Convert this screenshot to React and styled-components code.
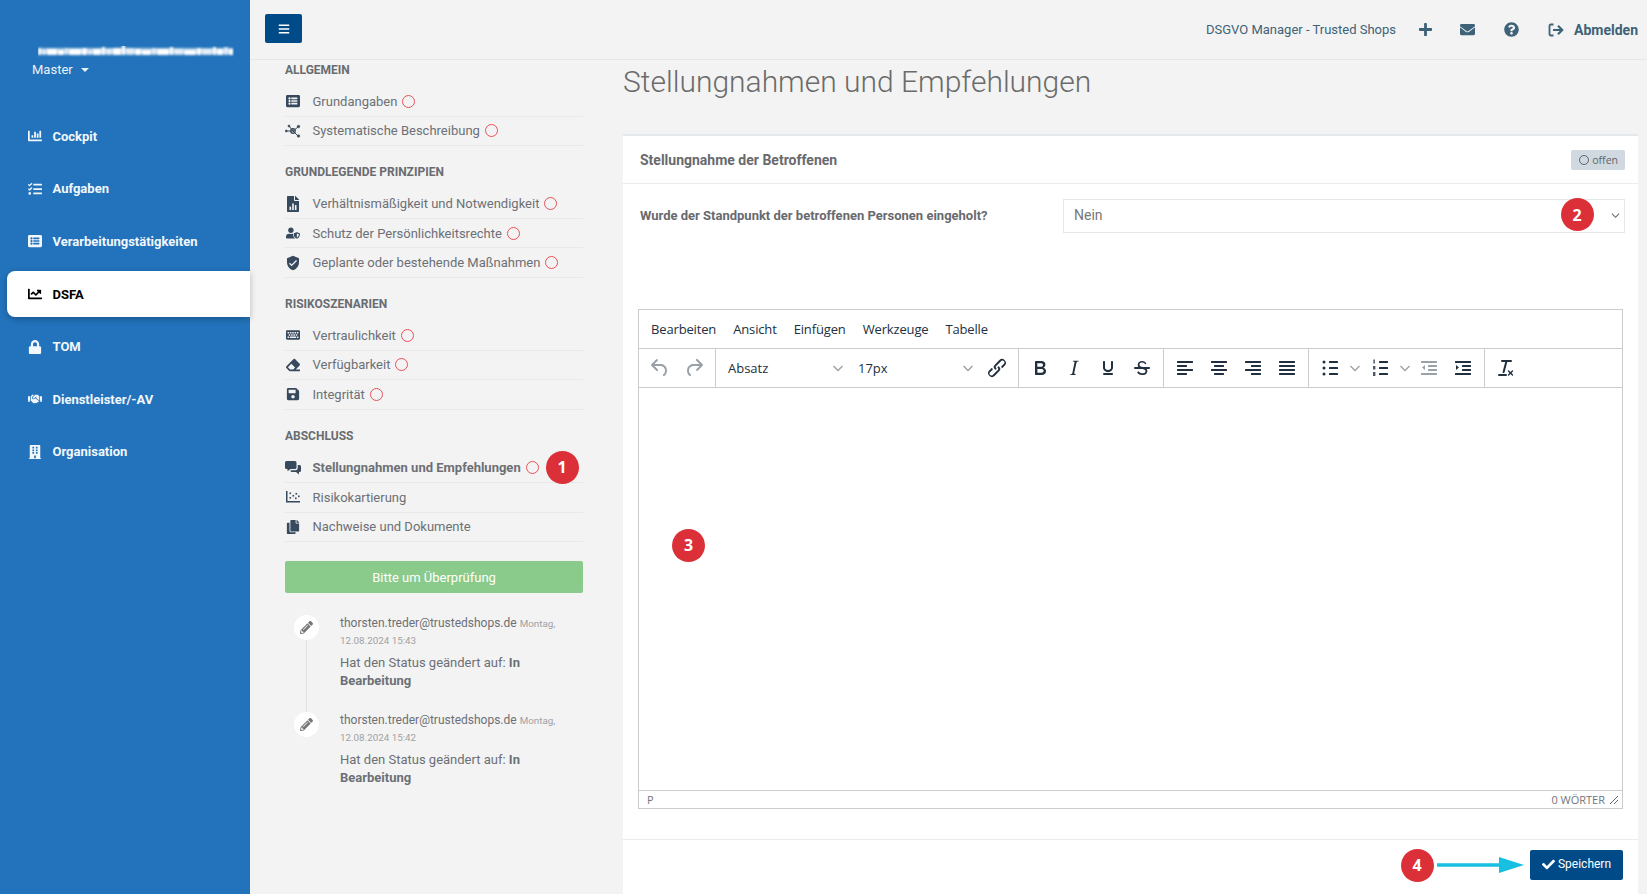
import React from 'react'
import styled, { createGlobalStyle } from 'styled-components'
import {
  FaBars, FaBuilding, FaChartBar, FaChartLine, FaCheck, FaCopy, FaEnvelope, FaEraser,
  FaHandshake, FaKeyboard, FaListAlt, FaLock, FaPencilAlt, FaPlus, FaQuestionCircle, FaSave,
  FaTasks, FaUserShield,
} from 'react-icons/fa'
import { MdVerifiedUser } from 'react-icons/md'

const GlobalStyle = createGlobalStyle`
  html, body {
    margin: 0;
    height: 100%;
    overflow: hidden;
    background: #f3f3f3;
    font-family: Roboto, 'Liberation Sans', sans-serif;
  }
  * { box-sizing: border-box; }
`

const FileChartIcon = () => (
  <svg viewBox="0 0 384 512" width="12" height="16" fill="currentColor">
    <path d="M224 136V0H24C10.700 0 0 10.700 0 24v464c0 13.300 10.700 24 24 24h336c13.300 0 24-10.700 24-24V160H248c-13.200 0-24-10.800-24-24zM384 122v6H256V0h6c6.400 0 12.500 2.500 17 7l98 98c4.500 4.500 7 10.600 7 17z" />
    <rect x="80" y="340" width="52" height="110" fill="#f3f3f3" />
    <rect x="166" y="240" width="52" height="210" fill="#f3f3f3" />
    <rect x="252" y="290" width="52" height="160" fill="#f3f3f3" />
  </svg>
)

const ScatterIcon = () => (
  <svg viewBox="0 0 14 12" width="14" height="12" fill="currentColor">
    <path d="M0 0h1.500v10H14v1.500H0z" />
    <rect x="3.500" y="1.500" width="1.600" height="1.600" />
    <rect x="3.500" y="6" width="1.600" height="1.600" />
    <rect x="6.500" y="4" width="1.600" height="1.600" />
    <rect x="9" y="6.500" width="1.600" height="1.600" />
    <rect x="9.500" y="2" width="1.600" height="1.600" />
    <rect x="12" y="4.500" width="1.600" height="1.600" />
  </svg>
)

const NodesIcon = () => (
  <svg viewBox="0 0 16 14" width="16" height="14" fill="currentColor" stroke="currentColor">
    <path d="M8 7L4 2M8 7l5-4M8 7l5 5M8 7H1" strokeWidth="1" fill="none" />
    <circle cx="8" cy="7" r="2.200" fill="none" strokeWidth="1.400" />
    <circle cx="4" cy="2" r="1.100" strokeWidth="0.500" />
    <circle cx="13.500" cy="2.500" r="1.300" strokeWidth="0.500" />
    <circle cx="13.500" cy="12" r="1.300" strokeWidth="0.500" />
    <circle cx="1.200" cy="7" r="1.100" strokeWidth="0.500" />
  </svg>
)

const BubblesIcon = () => (
  <svg viewBox="0 0 16 14" width="16" height="14" fill="currentColor">
    <path d="M1.500 0h8.500a1.500 1.500 0 0 1 1.500 1.500v5A1.500 1.500 0 0 1 10 8H5.500L2.500 10.200V8h-1A1.500 1.500 0 0 1 0 6.500v-5A1.500 1.500 0 0 1 1.500 0z" />
    <path d="M12.800 4h1.700A1.500 1.500 0 0 1 16 5.500v4a1.500 1.500 0 0 1-1.500 1.500H14v2.500L11 11H7a1.500 1.500 0 0 1-1.500-1.500V9.200H10a2.800 2.800 0 0 0 2.800-2.800z" />
  </svg>
)

const LogoutIcon = () => (
  <svg viewBox="0 0 16 14" width="16" height="14" fill="none" stroke="currentColor">
    <path d="M5.500 1.500H2.700a1.200 1.200 0 0 0-1.200 1.200v8.600a1.200 1.200 0 0 0 1.200 1.200h2.800" strokeWidth="1.800" />
    <path d="M5 7h9M10 2.800L14.200 7 10 11.200" strokeWidth="2.200" />
  </svg>
)

const LOGO_BARS = [
  [0, 3, 7], [4, 4, 5], [9, 10, 6], [20, 6, 5], [27, 3, 7], [31, 12, 6], [44, 5, 7], [50, 4, 5], [55, 8, 6],
  [64, 3, 8], [68, 6, 6], [75, 8, 7], [84, 3, 12], [88, 8, 7], [97, 6, 6], [104, 9, 5], [114, 4, 7], [119, 12, 6],
  [132, 3, 8], [136, 9, 6], [146, 12, 5], [159, 4, 7], [164, 10, 6], [175, 3, 8], [179, 6, 6], [186, 4, 8], [191, 4, 6],
]

const BlurredLogo = () => (
  <svg width="196" height="14" viewBox="0 0 196 14">
    <filter id="smear"><feGaussianBlur stdDeviation="1" /></filter>
    <g fill="#fff" filter="url(#smear)">
      <rect x="0" y="2" width="195" height="6" opacity="0.6" />
      {LOGO_BARS.map(([x, w, h], i) => (
        <rect key={i} x={x} y={9 - h} width={w} height={h} opacity={i % 3 === 1 ? 0.7 : 1} />
      ))}
    </g>
  </svg>
)

const NAV = [
  { label: 'Cockpit', icon: <FaChartBar /> },
  { label: 'Aufgaben', icon: <FaTasks /> },
  { label: 'Verarbeitungstätigkeiten', icon: <FaListAlt /> },
  { label: 'DSFA', icon: <FaChartLine />, active: true },
  { label: 'TOM', icon: <FaLock /> },
  { label: 'Dienstleister/-AV', icon: <FaHandshake /> },
  { label: 'Organisation', icon: <FaBuilding /> },
]

const SECTIONS = [
  {
    title: 'Allgemein',
    items: [
      { label: 'Grundangaben', icon: <FaListAlt /> },
      { label: 'Systematische Beschreibung', icon: <NodesIcon /> },
    ],
  },
  {
    title: 'Grundlegende Prinzipien',
    items: [
      { label: 'Verhältnismäßigkeit und Notwendigkeit', icon: <FileChartIcon /> },
      { label: 'Schutz der Persönlichkeitsrechte', icon: <FaUserShield /> },
      { label: 'Geplante oder bestehende Maßnahmen', icon: <MdVerifiedUser size={16} /> },
    ],
  },
  {
    title: 'Risikoszenarien',
    items: [
      { label: 'Vertraulichkeit', icon: <FaKeyboard /> },
      { label: 'Verfügbarkeit', icon: <FaEraser /> },
      { label: 'Integrität', icon: <FaSave /> },
    ],
  },
  {
    title: 'Abschluss',
    roomy: true,
    items: [
      { label: 'Stellungnahmen und Empfehlungen', icon: <BubblesIcon />, active: true },
      { label: 'Risikokartierung', icon: <ScatterIcon />, noRing: true },
      { label: 'Nachweise und Dokumente', icon: <FaCopy />, noRing: true },
    ],
  },
]

const HISTORY = [
  { user: 'thorsten.treder@trustedshops.de', date: '12.08.2024 15:43' },
  { user: 'thorsten.treder@trustedshops.de', date: '12.08.2024 15:42' },
]

const Tiny = ({ children, muted }) => (
  <svg viewBox="0 0 24 24" width="24" height="24" fill={muted ? '#9aa0a8' : '#222f3e'}>
    {children}
  </svg>
)

const lines = (rows) => rows.map(([x, y, w], i) => <rect key={i} x={x} y={y} width={w} height="2" rx="0.5" />)

const Chevron = () => (
  <svg viewBox="0 0 10 10" width="10" height="10" fill="none" stroke="#9aa0a8" strokeWidth="1.300">
    <path d="M0.500 3l4.500 4.500L9.500 3" />
  </svg>
)

const ToolIcons = {
  undo: <Tiny muted><path d="M6.400 8H12c3.700 0 6.200 2 6.800 5.100.6 2.700-.4 5.600-2.300 6.800a1 1 0 0 1-1-1.800c1.100-.6 1.800-2.700 1.400-4.600-.5-2.100-2.100-3.500-4.900-3.500H6.400l3.300 3.300a1 1 0 1 1-1.400 1.400l-5-5a1 1 0 0 1 0-1.400l5-5a1 1 0 0 1 1.400 1.400L6.400 8Z" /></Tiny>,
  redo: <Tiny muted><path d="M17.600 10H12c-2.800 0-4.400 1.400-4.900 3.500-.4 2 .3 4 1.400 4.600a1 1 0 1 1-1 1.800c-2-1.200-2.900-4.100-2.300-6.800.6-3 3-5.100 6.800-5.100h5.600l-3.300-3.300a1 1 0 1 1 1.400-1.400l5 5a1 1 0 0 1 0 1.400l-5 5a1 1 0 0 1-1.400-1.400l3.300-3.300Z" /></Tiny>,
  link: <Tiny><path d="M6.200 12.300a1 1 0 0 1 1.400 1.400l-2 2a2 2 0 1 0 2.600 2.800l4.800-4.800a1 1 0 0 0 0-1.400 1 1 0 1 1 1.400-1.300 2.900 2.900 0 0 1 0 4L9.600 20a3.900 3.900 0 0 1-5.500-5.500l2-2Zm11.600-.6a1 1 0 0 1-1.400-1.400l2-2a2 2 0 1 0-2.600-2.800L11 10.300a1 1 0 0 0 0 1.400 1 1 0 1 1-1.400 1.300 2.900 2.900 0 0 1 0-4L14.400 4a3.900 3.900 0 0 1 5.500 5.500l-2 2Z" /></Tiny>,
  bold: <Tiny><path d="M7.800 19c-.3 0-.5 0-.6-.2l-.2-.5V5.700c0-.2 0-.4.2-.5l.6-.2h5c1.500 0 2.700.3 3.500 1 .7.6 1.100 1.400 1.100 2.500a3 3 0 0 1-.6 1.900c-.4.6-1 1-1.600 1.200.4.1.9.3 1.300.6s.8.7 1 1.200c.4.4.5 1 .5 1.600 0 1.300-.4 2.300-1.300 3-.8.7-2.100 1-3.800 1H7.800Zm5-8.300c.6 0 1.200-.1 1.600-.5.4-.3.6-.7.6-1.300 0-1.100-.8-1.700-2.300-1.700H9.300v3.500h3.400Zm.5 6c.7 0 1.300-.1 1.700-.4.4-.4.6-.9.6-1.500s-.2-1-.7-1.400c-.4-.3-1-.4-2-.4H9.400v3.800h3.900Z" /></Tiny>,
  italic: <Tiny><path d="m16.700 4.700-.1.9h-.3c-.6 0-1 0-1.400.3-.3.3-.4.6-.5 1.100l-2.100 9.800v.6c0 .5.4.8 1.400.8h.2l-.2.8H8l.2-.8h.2c1.100 0 1.800-.5 2-1.500l2-9.800.1-.5c0-.6-.4-.8-1.400-.8h-.3l.2-.9h5.700Z" /></Tiny>,
  underline: <Tiny><path d="M16 5c.6 0 1 .4 1 1v5.500a4 4 0 0 1-.4 1.800l-1 1.400a5.300 5.300 0 0 1-5.500 1 5 5 0 0 1-1.600-1c-.5-.4-.8-.9-1.100-1.400a4 4 0 0 1-.4-1.800V6c0-.6.4-1 1-1s1 .4 1 1v5.500c0 .3 0 .6.2 1l.6.7a3.300 3.300 0 0 0 2.200.8 3.400 3.400 0 0 0 2.200-.8c.3-.2.4-.5.6-.8l.2-.9V6c0-.6.4-1 1-1ZM8 17h8c.6 0 1 .4 1 1s-.4 1-1 1H8a1 1 0 0 1 0-2Z" /></Tiny>,
  strike: <Tiny><path d="M15.600 8.500c-.5-.7-1-1.100-1.300-1.300-.6-.4-1.300-.6-2-.6-2.700 0-2.800 1.700-2.800 2.100 0 1.600 1.800 2 3.200 2.300 4.400.9 4.600 2.800 4.600 3.900 0 1.400-.7 4.100-5 4.100A6.200 6.200 0 0 1 7 16.400l1.500-1.100c.4.600 1.600 2 3.700 2 1.600 0 2.500-.4 3-1 .3-.4.300-.8.300-1 0-.8-.5-1.600-3-2.200-1.900-.4-4.800-1.100-4.800-4 0-2.400 2-4 4.500-4 1 0 1.900.2 2.500.6.7.4 1.200 1 1.700 1.700l-1.300 1Z" /><path d="M5 11h14a1 1 0 0 1 0 2H5a1 1 0 0 1 0-2Z" /></Tiny>,
  left: <Tiny>{lines([[4, 5, 16], [4, 9, 10], [4, 13, 16], [4, 17, 10]])}</Tiny>,
  center: <Tiny>{lines([[4, 5, 16], [7, 9, 10], [4, 13, 16], [7, 17, 10]])}</Tiny>,
  right: <Tiny>{lines([[4, 5, 16], [10, 9, 10], [4, 13, 16], [10, 17, 10]])}</Tiny>,
  justify: <Tiny>{lines([[4, 5, 16], [4, 9, 16], [4, 13, 16], [4, 17, 16]])}</Tiny>,
  bullets: (
    <Tiny>
      {lines([[11, 5, 9], [11, 11, 9], [11, 17, 9]])}
      <circle cx="6" cy="6" r="1.500" />
      <circle cx="6" cy="12" r="1.500" />
      <circle cx="6" cy="18" r="1.500" />
    </Tiny>
  ),
  numbers: (
    <Tiny>
      {lines([[11, 5, 9], [11, 11, 9], [11, 17, 9]])}
      <rect x="5.500" y="3.500" width="1.200" height="4" />
      <rect x="5" y="10" width="2.400" height="3.500" opacity="0.8" />
      <rect x="5" y="16" width="2.400" height="4" opacity="0.8" />
    </Tiny>
  ),
  outdent: <Tiny muted>{lines([[4, 5, 16], [11, 9, 9], [11, 13, 9], [4, 17, 16]])}<path d="M8 9v5l-3-2.500z" /></Tiny>,
  indent: <Tiny>{lines([[4, 5, 16], [11, 9, 9], [11, 13, 9], [4, 17, 16]])}<path d="M5 9v5l3-2.500z" /></Tiny>,
  clear: <Tiny><path d="M13.200 6a1 1 0 0 1 0 .2l-2.600 10a1 1 0 0 1-1 .8h-.2a.8.8 0 0 1-.8-1l2.600-10H8a1 1 0 1 1 0-2h9a1 1 0 0 1 0 2h-3.800ZM5 18h7a1 1 0 0 1 0 2H5a1 1 0 0 1 0-2Zm13 1.500L16.500 18 15 19.500a.7.7 0 0 1-1-1l1.500-1.500-1.500-1.500a.7.7 0 0 1 1-1l1.500 1.500 1.500-1.500a.7.7 0 0 1 1 1L17.500 17l1.500 1.500a.7.7 0 0 1-1 1Z" /></Tiny>,
}

export default function App() {
  return (
    <Page>
      <GlobalStyle />
      <Sidebar>
        <Logo><BlurredLogo /></Logo>
        <Tenant>Master<Caret /></Tenant>
        <NavList>
          {NAV.map((item) => (
            <NavItem key={item.label} $active={item.active}>
              <NavIcon>{item.icon}</NavIcon>
              {item.label}
            </NavItem>
          ))}
        </NavList>
      </Sidebar>

      <Main>
        <Topbar>
          <MenuButton><FaBars /></MenuButton>
          <TopRight>
            <Company>DSGVO Manager - Trusted Shops</Company>
            <TopIcon $w={32}><FaPlus /></TopIcon>
            <TopIcon $w={52}><FaEnvelope /></TopIcon>
            <TopIcon $w={36}><FaQuestionCircle /></TopIcon>
            <TopIcon $w={46} $pad={8}><LogoutIcon /></TopIcon>
            <Logout>Abmelden</Logout>
          </TopRight>
        </Topbar>

        <Body>
          <SubNav>
            {SECTIONS.map((section) => (
              <div key={section.title}>
                <SectionTitle $roomy={section.roomy}>{section.title}</SectionTitle>
                {section.items.map((item) => (
                  <SubRow key={item.label} $active={item.active}>
                    <SubIcon>{item.icon}</SubIcon>
                    {item.label}
                    {!item.noRing && <Ring />}
                  </SubRow>
                ))}
              </div>
            ))}
            <ReviewButton>Bitte um Überprüfung</ReviewButton>
            <Timeline>
              {HISTORY.map((entry) => (
                <TimelineEntry key={entry.date}>
                  <PenDot><FaPencilAlt /></PenDot>
                  <EntryText>
                    <EntryHead>
                      {entry.user} <small>Montag,</small> <small>{entry.date}</small>
                    </EntryHead>
                    <EntryBody>Hat den Status geändert auf: <b>In</b> <b>Bearbeitung</b></EntryBody>
                  </EntryText>
                </TimelineEntry>
              ))}
            </Timeline>
          </SubNav>

          <Content>
            <Title>Stellungnahmen und Empfehlungen</Title>
            <Card>
              <CardHeader>
                <CardTitle>Stellungnahme der Betroffenen</CardTitle>
                <StatusPill><PillRing />offen</StatusPill>
              </CardHeader>
              <Field>
                <FieldLabel>Wurde der Standpunkt der betroffenen Personen eingeholt?</FieldLabel>
                <SelectBox>
                  Nein
                  <svg viewBox="0 0 10 10" width="9" height="9" fill="none" stroke="#666" strokeWidth="1.200">
                    <path d="M1 3l4 4 4-4" />
                  </svg>
                </SelectBox>
              </Field>

              <Editor>
                <MenuBar>
                  {['Bearbeiten', 'Ansicht', 'Einfügen', 'Werkzeuge', 'Tabelle'].map((m) => (
                    <span key={m}>{m}</span>
                  ))}
                </MenuBar>
                <Toolbar>
                  <ToolGroup>
                    <ToolButton>{ToolIcons.undo}</ToolButton>
                    <ToolButton>{ToolIcons.redo}</ToolButton>
                  </ToolGroup>
                  <ToolGroup>
                    <ToolSelect>Absatz<Chevron /></ToolSelect>
                    <ToolSelect>17px<Chevron /></ToolSelect>
                    <ToolButton>{ToolIcons.link}</ToolButton>
                  </ToolGroup>
                  <ToolGroup>
                    <ToolButton>{ToolIcons.bold}</ToolButton>
                    <ToolButton>{ToolIcons.italic}</ToolButton>
                    <ToolButton>{ToolIcons.underline}</ToolButton>
                    <ToolButton>{ToolIcons.strike}</ToolButton>
                  </ToolGroup>
                  <ToolGroup>
                    <ToolButton>{ToolIcons.left}</ToolButton>
                    <ToolButton>{ToolIcons.center}</ToolButton>
                    <ToolButton>{ToolIcons.right}</ToolButton>
                    <ToolButton>{ToolIcons.justify}</ToolButton>
                  </ToolGroup>
                  <ToolGroup>
                    <SplitButton>{ToolIcons.bullets}<Chevron /></SplitButton>
                    <SplitButton>{ToolIcons.numbers}<Chevron /></SplitButton>
                    <ToolButton>{ToolIcons.outdent}</ToolButton>
                    <ToolButton>{ToolIcons.indent}</ToolButton>
                  </ToolGroup>
                  <ToolGroup $last>
                    <ToolButton>{ToolIcons.clear}</ToolButton>
                  </ToolGroup>
                </Toolbar>
                <EditArea />
                <StatusBar>
                  <span>P</span>
                  <WordCount>0 WÖRTER</WordCount>
                  <svg viewBox="0 0 10 10" width="10" height="10" fill="none" stroke="#666" strokeWidth="1">
                    <path d="M1 9l8-8M5 9l4-4" />
                  </svg>
                </StatusBar>
              </Editor>

              <CardFooter>
                <SaveButton><FaCheck />Speichern</SaveButton>
              </CardFooter>
            </Card>
          </Content>
        </Body>
      </Main>

      <Marker $x={562} $y={467}>1</Marker>
      <Marker $x={1577} $y={214.500}>2</Marker>
      <Marker $x={688.500} $y={545}>3</Marker>
      <Marker $x={1417} $y={865}>4</Marker>
      <ArrowMark viewBox="0 0 88 18" width="88" height="18">
        <path d="M0 7.200h62V1l25 8-25 8v-6.200H0z" fill="#17bfe0" />
      </ArrowMark>
    </Page>
  )
}

const Page = styled.div`
  position: relative;
  display: flex;
  width: 1647px;
  height: 894px;
  overflow: hidden;
  background: #f3f3f3;
  color: #6c7076;
  font-size: 14px;
`

const Sidebar = styled.aside`
  flex: 0 0 250px;
  padding-top: 46px;
  background: #2273bb;
  color: #fff;
`

const Logo = styled.div`
  display: flex;
  padding-left: 38px;
  height: 14px;
`

const Tenant = styled.div`
  display: flex;
  align-items: center;
  height: 20px;
  margin-top: -1px;
  padding-left: 32px;
  font-size: 13px;
  color: #eaf2f9;
`

const Caret = styled.span`
  margin-left: 8px;
  margin-top: 2px;
  border-left: 4px solid transparent;
  border-right: 4px solid transparent;
  border-top: 4px solid #eaf2f9;
`

const NavList = styled.nav`
  display: flex;
  flex-direction: column;
  gap: 6.600px;
  margin-top: 34.300px;
  padding-left: 7px;
`

const NavItem = styled.div`
  display: flex;
  align-items: center;
  height: 46px;
  padding-left: 21px;
  font-size: 13px;
  font-weight: 700;
  border-radius: 8px 0 0 8px;
  color: ${(p) => (p.$active ? '#000' : '#f2f7fb')};
  background: ${(p) => (p.$active ? '#fff' : 'transparent')};
  box-shadow: ${(p) => (p.$active ? '0 2px 6px rgba(0, 0, 0, 0.25)' : 'none')};
`

const NavIcon = styled.span`
  display: flex;
  justify-content: center;
  flex: 0 0 14px;
  margin-right: 10.500px;
  font-size: 14px;

  svg { width: auto; flex: none; }
`

const Main = styled.div`
  flex: 1;
  display: flex;
  flex-direction: column;
  min-width: 0;
`

const Topbar = styled.header`
  display: flex;
  align-items: center;
  justify-content: space-between;
  flex: 0 0 60px;
  padding: 0 9px 2px 15px;
  border-bottom: 1px solid #e6e6e6;
`

const MenuButton = styled.button`
  display: flex;
  align-items: center;
  justify-content: center;
  width: 37px;
  height: 29px;
  padding: 0;
  border: 0;
  border-radius: 2px;
  background: #004b87;
  color: #fff;
  font-size: 12px;
`

const TopRight = styled.div`
  display: flex;
  align-items: center;
  padding-top: 2px;
  color: #3e6277;
`

const Company = styled.span`
  margin-right: 13px;
  font-size: 13px;
`

const TopIcon = styled.span`
  display: flex;
  justify-content: center;
  width: ${(p) => p.$w}px;
  padding-left: ${(p) => p.$pad || 0}px;
  font-size: 15px;
`

const Logout = styled.span`
  margin-left: -1px;
  font-size: 14px;
  font-weight: 700;
`

const Body = styled.div`
  flex: 1;
  display: flex;
  min-height: 0;
`

const SubNav = styled.div`
  flex: 0 0 373px;
  padding: 0 40px 0 35px;
`

const SectionTitle = styled.div`
  height: ${(p) => (p.$roomy ? 44 : 43.250)}px;
  padding-top: 16px;
  line-height: 20px;
  font-size: 12px;
  font-weight: 700;
  text-transform: uppercase;
  color: #696c70;

  div:first-child > & {
    height: 27px;
    padding-top: 0;
  }
`

const SubRow = styled.div`
  display: flex;
  align-items: center;
  height: 29.500px;
  border-bottom: 1px solid #e6e8ea;
  font-size: 13px;
  font-weight: ${(p) => (p.$active ? 700 : 400)};
`

const SubIcon = styled.span`
  display: flex;
  justify-content: center;
  flex: 0 0 16px;
  margin-right: 11.500px;
  color: #37495c;
  font-size: 14px;

  svg { width: auto; flex: none; }
`

const Ring = styled.span`
  flex: 0 0 13px;
  height: 13px;
  margin-left: 5px;
  border: 1.400px solid #e8525a;
  border-radius: 50%;
`

const ReviewButton = styled.button`
  display: block;
  width: 100%;
  height: 32px;
  margin-top: 19px;
  border: 0;
  border-radius: 2px;
  background: #8aca8a;
  color: #fff;
  font-family: inherit;
  font-size: 13px;
`

const Timeline = styled.div`
  margin-top: 22px;
  padding-left: 9px;
`

const TimelineEntry = styled.div`
  position: relative;
  display: flex;
  height: 96.500px;

  &:first-child::before {
    content: '';
    position: absolute;
    left: 11.500px;
    top: 25px;
    bottom: 0;
    width: 1px;
    background: #e2e2e2;
  }
`

const PenDot = styled.span`
  display: flex;
  align-items: center;
  justify-content: center;
  flex: 0 0 25px;
  height: 25px;
  margin-right: 21px;
  border-radius: 50%;
  background: #fff;
  color: #777;
  font-size: 13px;
`

const EntryText = styled.div`
  width: 220px;
`

const EntryHead = styled.div`
  font-size: 12px;
  line-height: 17px;

  small {
    font-size: 9.800px;
    color: #9fa1a4;
  }
`

const EntryBody = styled.div`
  margin-top: 5px;
  font-size: 13px;
  line-height: 18px;
`

const Content = styled.main`
  flex: 1;
  display: flex;
  flex-direction: column;
  min-width: 0;
  padding-right: 9px;
`

const Title = styled.h1`
  height: 74px;
  margin: 0;
  padding-top: 2px;
  font-size: 30px;
  line-height: 40px;
  font-weight: 300;
  color: #6b6b6b;
`

const Card = styled.section`
  flex: 1;
  display: flex;
  flex-direction: column;
  border-top: 2px solid #e6e9ec;
  background: #fff;
`

const CardHeader = styled.div`
  display: flex;
  align-items: center;
  justify-content: space-between;
  flex: 0 0 48px;
  padding: 0 13px 0 17px;
  border-bottom: 1px solid #e9ebee;
`

const CardTitle = styled.h2`
  margin: 0;
  font-size: 14px;
  font-weight: 700;
  color: #686a6e;
`

const StatusPill = styled.span`
  display: flex;
  align-items: center;
  gap: 3px;
  height: 20px;
  padding: 0 7px 0 8px;
  border-radius: 2px;
  background: #d0d9df;
  color: #5a6570;
  font-family: 'Open Sans', sans-serif;
  font-size: 10.500px;
`

const PillRing = styled.span`
  width: 10px;
  height: 10px;
  border: 1px solid #5a6570;
  border-radius: 50%;
`

const Field = styled.div`
  display: flex;
  align-items: center;
  justify-content: space-between;
  margin-top: 15px;
  padding: 0 13px 0 17px;
`

const FieldLabel = styled.label`
  margin-top: -2px;
  font-size: 13px;
  font-weight: 700;
  color: #686a6e;
`

const SelectBox = styled.div`
  display: flex;
  align-items: center;
  justify-content: space-between;
  width: 562px;
  height: 34px;
  padding: 0 4px 2px 10px;
  border: 1px solid #e5e8ea;
  color: #777;
  font-size: 14px;
`

const Editor = styled.div`
  display: flex;
  flex-direction: column;
  height: 500px;
  margin: 76px 15px 0 15px;
  border: 1px solid #ccc;
  color: #222f3e;
  font-family: 'Open Sans', 'Noto Sans', sans-serif;
`

const MenuBar = styled.div`
  display: flex;
  align-items: center;
  flex: 0 0 39px;
  gap: 17px;
  padding-left: 12px;
  border-bottom: 1px solid #ccc;
  font-size: 13px;
  letter-spacing: -0.150px;
`

const Toolbar = styled.div`
  display: flex;
  flex: 0 0 39px;
  border-bottom: 1px solid #ccc;
`

const ToolGroup = styled.div`
  display: flex;
  align-items: center;
  padding: 0 4px;
  border-right: ${(p) => (p.$last ? '0' : '1px solid #ccc')};
`

const ToolButton = styled.span`
  display: flex;
  align-items: center;
  justify-content: center;
  width: 34px;
  height: 34px;
`

const SplitButton = styled.span`
  display: flex;
  align-items: center;
  width: 49.500px;
  padding-left: 5px;
  gap: 8px;
`

const ToolSelect = styled.span`
  display: flex;
  align-items: center;
  justify-content: space-between;
  width: 130px;
  padding: 0 7px 0 8px;
  font-size: 13px;
`

const EditArea = styled.div`
  flex: 1;
`

const StatusBar = styled.div`
  display: flex;
  align-items: center;
  flex: 0 0 18px;
  padding: 0 3px 0 8px;
  border-top: 1px solid #ccc;
  color: #70757c;
  font-size: 11px;
`

const WordCount = styled.span`
  margin-left: auto;
  margin-right: 4px;
`

const CardFooter = styled.div`
  display: flex;
  justify-content: flex-end;
  align-items: flex-start;
  flex: 1;
  margin-top: 30px;
  padding: 10px 15px 0 0;
  border-top: 1px solid #e9ebee;
`

const SaveButton = styled.button`
  display: flex;
  align-items: center;
  justify-content: center;
  gap: 3px;
  width: 93px;
  height: 30px;
  padding: 0 0 2px;
  border: 0;
  border-radius: 2px;
  background: #004b87;
  color: #fff;
  font-family: inherit;
  font-size: 12px;

  svg { font-size: 13px; }
`

const Marker = styled.span`
  position: absolute;
  left: ${(p) => p.$x - 16.500}px;
  top: ${(p) => p.$y - 16.500}px;
  display: flex;
  align-items: center;
  justify-content: center;
  width: 33px;
  height: 33px;
  border-radius: 50%;
  background: #dc3039;
  color: #fff;
  font-family: 'Open Sans', sans-serif;
  font-size: 16px;
  font-weight: 700;
`

const ArrowMark = styled.svg`
  position: absolute;
  left: 1437px;
  top: 856px;
`
